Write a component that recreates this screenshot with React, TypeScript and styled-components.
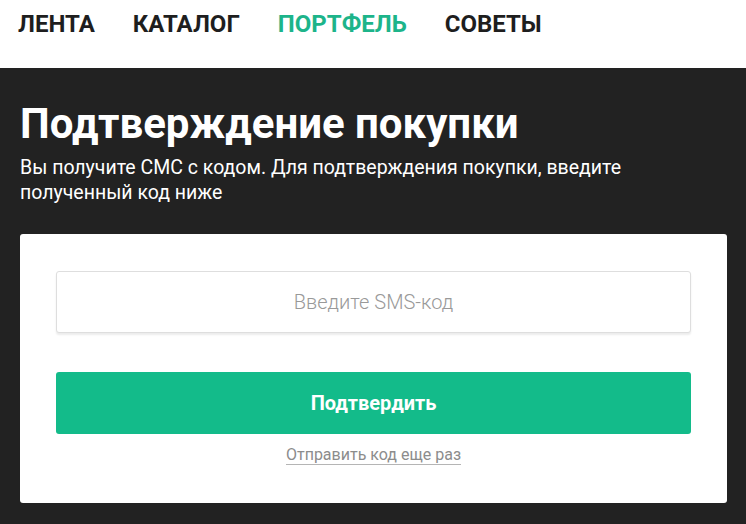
import React from 'react'
import styled, { createGlobalStyle } from 'styled-components'

const GlobalStyle = createGlobalStyle`
    html, body {
        margin: 0;
        padding: 0;
        background: #222222;
    }
    body {
        font-family: Roboto, 'Liberation Sans', Arial, sans-serif;
    }
    * {
        box-sizing: border-box;
    }
`

const navItems = [
    { id: 1, label: 'ЛЕНТА', active: false },
    { id: 2, label: 'КАТАЛОГ', active: false },
    { id: 3, label: 'ПОРТФЕЛЬ', active: true },
    { id: 4, label: 'СОВЕТЫ', active: false }
]

function App() {
    return (
        <Page>
            <GlobalStyle />
            <Nav>
                {navItems.map((item) => (
                    <NavItem key={item.id} active={item.active}>
                        {item.label}
                    </NavItem>
                ))}
            </Nav>
            <Main>
                <Title>Подтверждение покупки</Title>
                <Lead>
                    Вы получите СМС с кодом. Для подтверждения покупки, введите
                    <br />
                    полученный код ниже
                </Lead>
                <Card>
                    <CodeInput type="text" placeholder="Введите SMS-код" />
                    <ConfirmButton type="button">Подтвердить</ConfirmButton>
                    <ResendWrap>
                        <ResendLink href="#">Отправить код еще раз</ResendLink>
                    </ResendWrap>
                </Card>
            </Main>
        </Page>
    )
}

export default App

const Page = styled.div`
    width: 100%;
    min-height: 524px;
    display: flex;
    flex-direction: column;
`

const Nav = styled.nav`
    height: 68px;
    background: #ffffff;
    display: flex;
    align-items: flex-start;
    gap: 38px;
    padding: 9px 0 0 18px;
`

const NavItem = styled.a<{ active: boolean }>`
    font-size: 24px;
    font-weight: 700;
    line-height: 30px;
    color: ${(p) => (p.active ? '#1db48a' : '#1e1e1e')};
    text-decoration: none;
    cursor: pointer;
`

const Main = styled.main`
    flex: 1;
    background: #222222;
    padding: 32px 19px 22px 20px;
    display: flex;
    flex-direction: column;
`

const Title = styled.h1`
    margin: 0;
    font-size: 42px;
    line-height: 48px;
    font-weight: 700;
    color: #ffffff;
`

const Lead = styled.p`
    margin: 7px 0 0;
    font-size: 19.5px;
    line-height: 25px;
    font-weight: 400;
    color: #ffffff;
`

const Card = styled.div`
    margin-top: 29px;
    background: #ffffff;
    border-radius: 3px;
    padding: 37px 36px 38px;
    display: flex;
    flex-direction: column;
`

const CodeInput = styled.input`
    width: 100%;
    height: 62px;
    border: 1px solid #dedede;
    border-radius: 3px;
    box-shadow: 0 2px 2px rgba(0, 0, 0, 0.08);
    font-family: inherit;
    font-size: 20px;
    text-align: center;
    color: #333333;
    outline: none;

    &::placeholder {
        color: #999999;
        font-weight: 300;
    }
`

const ConfirmButton = styled.button`
    margin-top: 39px;
    width: 100%;
    height: 62px;
    border: none;
    border-radius: 3px;
    background: #13bb8a;
    color: #ffffff;
    font-family: inherit;
    font-size: 20px;
    font-weight: 700;
    cursor: pointer;
`

const ResendWrap = styled.div`
    margin-top: 11px;
    display: flex;
    justify-content: center;
`

const ResendLink = styled.a`
    font-size: 16px;
    line-height: 19px;
    color: #8c8c8c;
    text-decoration: none;
    border-bottom: 1px solid #b5b5b5;
`
